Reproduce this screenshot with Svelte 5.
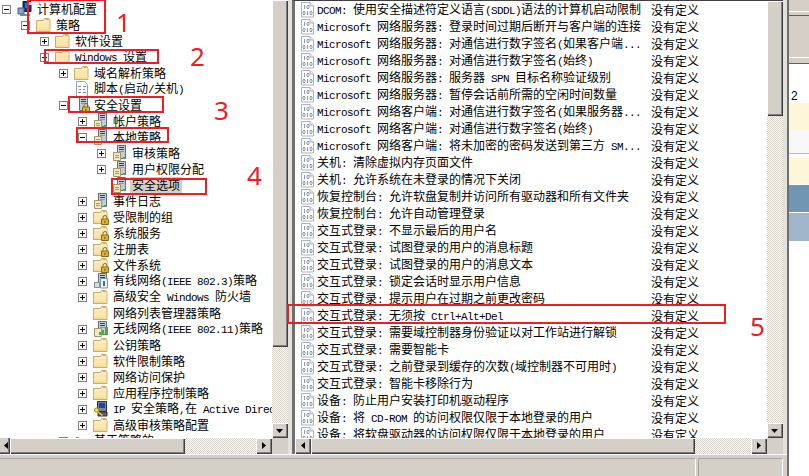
<script>
  const tree = [
    [0, 'minus', 'computer', '计算机配置'],
    [1, 'minus', 'folder', '策略'],
    [2, 'plus', 'folder', '软件设置'],
    [2, 'minus', 'folder', 'Windows 设置'],
    [3, 'plus', 'folder', '域名解析策略'],
    [3, null, 'script', '脚本(启动/关机)'],
    [3, 'minus', 'lockserver', '安全设置'],
    [4, 'plus', 'server', '帐户策略'],
    [4, 'minus', 'server', '本地策略'],
    [5, 'plus', 'server', '审核策略'],
    [5, 'plus', 'server', '用户权限分配'],
    [5, null, 'server', '安全选项', true],
    [4, 'plus', 'server', '事件日志'],
    [4, 'plus', 'lockfolder', '受限制的组'],
    [4, 'plus', 'lockfolder', '系统服务'],
    [4, 'plus', 'lockfolder', '注册表'],
    [4, 'plus', 'lockfolder', '文件系统'],
    [4, 'plus', 'net', '有线网络(IEEE 802.3)策略'],
    [4, 'plus', 'folder', '高级安全 Windows 防火墙'],
    [4, null, 'folder', '网络列表管理器策略'],
    [4, 'plus', 'wireless', '无线网络(IEEE 802.11)策略'],
    [4, 'plus', 'folder', '公钥策略'],
    [4, 'plus', 'folder', '软件限制策略'],
    [4, 'plus', 'folder', '网络访问保护'],
    [4, 'plus', 'folder', '应用程序控制策略'],
    [4, 'plus', 'ip', 'IP 安全策略,在 Active Directory (...)'],
    [4, 'plus', 'folder', '高级审核策略配置'],
    [3, 'plus', 'qos', '基于策略的 QoS']
  ];

  const list = [
    'DCOM: 使用安全描述符定义语言(SDDL)语法的计算机启动限制',
    'Microsoft 网络服务器: 登录时间过期后断开与客户端的连接',
    'Microsoft 网络服务器: 对通信进行数字签名(如果客户端...',
    'Microsoft 网络服务器: 对通信进行数字签名(始终)',
    'Microsoft 网络服务器: 服务器 SPN 目标名称验证级别',
    'Microsoft 网络服务器: 暂停会话前所需的空闲时间数量',
    'Microsoft 网络客户端: 对通信进行数字签名(如果服务器...',
    'Microsoft 网络客户端: 对通信进行数字签名(始终)',
    'Microsoft 网络客户端: 将未加密的密码发送到第三方 SM...',
    '关机: 清除虚拟内存页面文件',
    '关机: 允许系统在未登录的情况下关闭',
    '恢复控制台: 允许软盘复制并访问所有驱动器和所有文件夹',
    '恢复控制台: 允许自动管理登录',
    '交互式登录: 不显示最后的用户名',
    '交互式登录: 试图登录的用户的消息标题',
    '交互式登录: 试图登录的用户的消息文本',
    '交互式登录: 锁定会话时显示用户信息',
    '交互式登录: 提示用户在过期之前更改密码',
    '交互式登录: 无须按 Ctrl+Alt+Del',
    '交互式登录: 需要域控制器身份验证以对工作站进行解锁',
    '交互式登录: 需要智能卡',
    '交互式登录: 之前登录到缓存的次数(域控制器不可用时)',
    '交互式登录: 智能卡移除行为',
    '设备: 防止用户安装打印机驱动程序',
    '设备: 将 CD-ROM 的访问权限仅限于本地登录的用户',
    '设备: 将软盘驱动器的访问权限仅限于本地登录的用户'
  ];

  const runs = (s) =>
    s.split(/([\x00-\x7f]+)/).filter(Boolean).map((t) => ({ t, lat: /^[\x00-\x7f]/.test(t) }));
</script>

{#snippet label(s)}
  {#each runs(s) as r}{#if r.lat}<span class="lat">{r.t}</span>{:else}{r.t}{/if}{/each}
{/snippet}

{#snippet arrow(dir)}
  <svg width="8" height="8" viewBox="0 0 8 8">
    {#if dir === 'down'}<path d="M0 2h7L3.5 6z" fill="#000" />{/if}
    {#if dir === 'left'}<path d="M6 0v7L2 3.5z" fill="#000" />{/if}
    {#if dir === 'right'}<path d="M2 0v7l4-3.500z" fill="#000" />{/if}
  </svg>
{/snippet}

{#snippet folderShape()}
  <path d="M.5 3.500h7l1-2h4.500l1 2v11H.5z" fill="#fbe6ac" stroke="#c8ac6c" />
  <path d="M1.500 4.500h12v1h-12z" fill="#fff6d6" />
  <path d="M1.500 12h12v2h-12z" fill="#f7dc92" />
  <path d="M10 2h2.500v1H10z" fill="#8fb0d0" />
{/snippet}

{#snippet lock()}
  <path d="M10 10V8.500a2 2 0 0 1 4 0V10" fill="none" stroke="#8a6a18" />
  <path d="M8.500 10h7v5.500h-7z" fill="#e0b030" stroke="#8a6a18" />
  <path d="M11.500 12h1v2h-1z" fill="#5a4008" />
{/snippet}

{#snippet tower()}
  <path d="M5.500 .5h8v13h-8z" fill="#c3ccd6" stroke="#5f6f80" />
  <path d="M7 2h5v1H7zM7 4h5v1H7z" fill="#2f4258" />
  <path d="M7 6h5v1H7z" fill="#8899aa" />
{/snippet}

{#snippet icon(kind)}
  <svg class="ico" width="16" height="16" viewBox="0 0 16 16">
    {#if kind === 'folder'}
      {@render folderShape()}
    {:else if kind === 'lockfolder'}
      {@render folderShape()}
      {@render lock()}
    {:else if kind === 'computer'}
      <path d="M6 .5h8v10H6z" fill="#1b2f7a" stroke="#111b44" />
      <path d="M8 2h4v5H8z" fill="#2f6fd8" />
      <path d="M1 7h6v6H1z" fill="#8ea2c4" stroke="#4a5a80" />
      <path d="M3 13h10v2H3z" fill="#7d8794" />
      <path d="M12 1h3v3h-3z" fill="#d8dde6" />
    {:else if kind === 'script'}
      <path d="M2.500 .5h8l3 3v12h-11z" fill="#fff" stroke="#9aa4b4" />
      <path d="M4 5h3v1H4zM9 5h3v1H9zM5 8h2v1H5zM9 8h2v1H9zM4 11h3v1H4zM9 11h3v1H9z" fill="#7d8ba0" />
    {:else if kind === 'server' || kind === 'lockserver'}
      {@render tower()}
      {#if kind === 'server'}
        <path d="M1.500 7.500h7v8h-7z" fill="#f5e9c0" stroke="#a49468" />
        <path d="M3 10h4v1H3zM3 12h4v1H3z" fill="#a49468" />
        <path d="M11 12h2v2h-2z" fill="#3fae3a" />
      {:else}
        {@render lock()}
      {/if}
    {:else if kind === 'net'}
      {@render tower()}
      <path d="M7.500 5.500h7v9.500h-7z" fill="#eef4fb" stroke="#7f93aa" />
      <path d="M10 8h2v5h-2z" fill="#2f6fd0" />
      <path d="M1.500 9.500h5v5h-5z" fill="#d7dde4" stroke="#7f8a98" />
    {:else if kind === 'wireless'}
      {@render tower()}
      <path d="M1.500 7.500h7v8h-7z" fill="#f5e9c0" stroke="#a49468" />
      <path d="M6 14h2v-3H6zM9 14h2V9H9zM12 14h3V6h-3z" fill="#4ea83e" />
    {:else if kind === 'ip'}
      <path d="M4.500 .5h9v10h-9z" fill="#7c8694" stroke="#2a3038" />
      <path d="M6 2h6v5H6z" fill="#1f3fc0" />
      <path d="M5 11h9v4H5z" fill="#5c6470" stroke="#2a3038" />
      <circle cx="3.500" cy="9" r="2" fill="#ffe83a" stroke="#9a8a10" />
      <path d="M4.500 10.500l5 4" stroke="#e8d020" stroke-width="1.600" />
    {:else if kind === 'qos'}
      <path d="M2 4h3v12H2z" fill="#56b848" />
      <path d="M6 6h3v10H6z" fill="#e06a5a" />
    {/if}
  </svg>
{/snippet}

{#snippet listIcon()}
  <svg class="lico" width="14" height="16" viewBox="0 0 14 16">
    <path d="M.5 .5h8.500l3.500 3.500v11H.5z" fill="#fff" stroke="#aab1c2" />
    <path d="M9 .5v3.500h3.500" fill="#e8ebf2" stroke="#aab1c2" />
    <path d="M3 3h1v4H3zM6 3h2v1H6zM6 6h2v1H6zM5.500 4h1v2h-1zM7.500 4h1v2h-1z" fill="#8c9ab4" />
    <path d="M2 9h2v1H2zM2 12h2v1H2zM1.500 10h1v2h-1zM3.500 10h1v2h-1zM6 9h1v4H6zM9 9h2v1H9zM9 12h2v1H9zM8.500 10h1v2h-1zM10.500 10h1v2h-1z" fill="#8c9ab4" />
  </svg>
{/snippet}

<div class="root">
  <div class="content">
    <div class="main">
      <section class="pane left">
        <div class="pane-top">
          <div class="tree">
            {#each tree as [lvl, exp, ic, text, sel]}
              <div class="trow" style="padding-left:{lvl * 19 + 2}px">
                {#if exp}
                  <svg class="exp" width="9" height="9" viewBox="0 0 9 9">
                    <rect x=".5" y=".5" width="8" height="8" fill="#fff" stroke="#808080" />
                    <path d="M2 4h5v1H2z" fill="#000" />
                    {#if exp === 'plus'}<path d="M4 2h1v5H4z" fill="#000" />{/if}
                  </svg>
                {:else}
                  <span class="exp"></span>
                {/if}
                {@render icon(ic)}
                <span class="ttext" class:sel>{@render label(text)}</span>
              </div>
            {/each}
          </div>
          <div class="vbar">
            <div class="btn thumb thumb-left"></div>
            <div class="dither"></div>
            <div class="btn sq">{@render arrow('down')}</div>
          </div>
        </div>
        <div class="hbar">
          <div class="btn sq cut">{@render arrow('left')}</div>
          <div class="btn hthumb hthumb-left"></div>
          <div class="dither"></div>
          <div class="btn sq">{@render arrow('right')}</div>
          <div class="corner"></div>
        </div>
      </section>

      <div class="splitter"></div>

      <section class="pane right">
        <div class="pane-top">
          <div class="listview">
            {#each list as row}
              <div class="lrow">
                {@render listIcon()}
                <span class="lname">{@render label(row)}</span>
                <span class="lval">没有定义</span>
              </div>
            {/each}
          </div>
          <div class="vbar">
            <div class="btn thumb thumb-right"></div>
            <div class="dither"></div>
            <div class="btn sq">{@render arrow('down')}</div>
          </div>
        </div>
        <div class="hbar">
          <div class="btn sq">{@render arrow('left')}</div>
          <div class="btn hthumb hthumb-right"></div>
          <div class="dither"></div>
          <div class="btn sq">{@render arrow('right')}</div>
          <div class="corner"></div>
        </div>
      </section>

      <div class="splitter"></div>
    </div>

    <footer class="status">
      <div class="cell cell-a"></div>
      <div class="cell cell-b"></div>
    </footer>
  </div>

  <aside class="side">
    <div class="s-tab1"></div>
    <div class="s-tab2"></div>
    <div class="s-head"></div>
    <div class="s-num"><span>2</span></div>
    <div class="s-row cream h27"></div>
    <div class="s-row pale"></div>
    <div class="s-row cream h27 gaptop"></div>
    <div class="s-row blue"></div>
    <div class="s-row lblue"></div>
    <div class="s-rest"></div>
  </aside>

  <div class="mark b1"></div>
  <div class="mark b2"></div>
  <div class="mark b3"></div>
  <div class="mark b4"></div>
  <div class="mark b5"></div>
  <div class="mark b6"></div>
  <span class="num n1">1</span>
  <span class="num n2">2</span>
  <span class="num n3">3</span>
  <span class="num n4">4</span>
  <span class="num n5">5</span>
</div>

<style>
  :global(body) {
    margin: 0;
    background: #d4d0c8;
  }
  .root {
    position: relative;
    display: flex;
    width: 809px;
    height: 476px;
    overflow: hidden;
    background: #d4d0c8;
    color: #000;
    font: 12px/16px "Noto Sans CJK SC", sans-serif;
  }
  .lat {
    font-family: "Liberation Mono", monospace;
    font-size: 11px;
    letter-spacing: -0.6px;
    white-space: pre;
  }
  .content {
    display: flex;
    flex-direction: column;
    width: 787px;
    border-right: 2px solid #6e6e6e;
  }
  .main {
    display: flex;
    height: 454px;
    border-bottom: 1px solid #fff;
  }
  .pane {
    display: flex;
    flex-direction: column;
    height: 454px;
  }
  .left {
    width: 288px;
  }
  .splitter {
    width: 4px;
    background: #e4e1da;
  }
  .right {
    width: 488px;
    border-left: 3px solid #6e6e6e;
    border-top: 1px solid #404040;
    height: 453px;
    box-sizing: content-box;
  }
  .pane-top {
    display: flex;
    flex: 1;
    min-height: 0;
  }
  .tree {
    flex: 1;
    min-width: 0;
    padding-top: 1px;
    overflow: hidden;
    background: #fff;
  }
  .trow {
    display: flex;
    align-items: center;
    height: 16px;
    white-space: nowrap;
  }
  .exp {
    flex: none;
    width: 9px;
    height: 9px;
    margin-right: 6px;
  }
  .ico {
    flex: none;
    margin-right: 4px;
  }
  .ttext {
    line-height: 16px;
  }
  .sel {
    margin: 0 -2px;
    padding: 0 2px;
    background: #d4d0c8;
  }
  .listview {
    flex: 1;
    min-width: 0;
    overflow: hidden;
    background: #fff;
  }
  .lrow {
    display: flex;
    align-items: center;
    height: 17px;
    padding-left: 6px;
    white-space: nowrap;
  }
  .lico {
    flex: none;
    margin-right: 2px;
  }
  .lname {
    flex: none;
    width: 334px;
    overflow: hidden;
    line-height: 17px;
  }
  .vbar {
    display: flex;
    flex: none;
    flex-direction: column;
    width: 16px;
  }
  .hbar {
    display: flex;
    flex: none;
    height: 16px;
  }
  .dither {
    flex: 1;
    background: repeating-conic-gradient(#d4d0c8 0 25%, #fff 0 50%) 0 0 / 2px 2px;
  }
  .btn {
    flex: none;
    display: flex;
    align-items: center;
    justify-content: center;
    box-sizing: border-box;
    background: #d4d0c8;
    box-shadow: inset 1px 1px 0 #fff, inset -1px -1px 0 #404040, inset -2px -2px 0 #808080;
  }
  .sq {
    width: 16px;
    height: 15px;
  }
  .hbar .sq {
    height: 16px;
  }
  .cut {
    width: 10px;
    box-shadow: inset -1px -1px 0 #404040, inset -2px -2px 0 #808080;
    justify-content: flex-end;
  }
  .thumb {
    width: 16px;
  }
  .thumb-left {
    height: 347px;
  }
  .thumb-right {
    height: 115px;
  }
  .hthumb-left {
    width: 175px;
  }
  .hthumb-right {
    width: 384px;
  }
  .corner {
    flex: none;
    width: 16px;
    background: #d4d0c8;
  }
  .status {
    flex: 1;
    display: flex;
    gap: 2px;
    padding: 3px 4px 0 0;
  }
  .cell {
    height: 18px;
    border-top: 1px solid #a8a5a0;
    border-right: 1px solid #fff;
    border-left: 1px solid #a8a5a0;
  }
  .cell-a {
    flex: 1;
    border-left: none;
  }
  .cell-b {
    width: 83px;
  }
  .side {
    display: flex;
    flex-direction: column;
    width: 20px;
    background: #fff;
  }
  .s-tab1 {
    height: 11px;
    background: #d4d0c8;
    border-bottom: 1px solid #fff;
  }
  .s-tab2 {
    height: 3px;
    background: #d4d0c8;
    border-bottom: 1px solid #606060;
  }
  .s-head {
    height: 47px;
    border-bottom: 1px solid #606060;
    background: linear-gradient(#fff, #fff) 0 41px / 100% 1px no-repeat #d4d0c8;
  }
  .s-num {
    height: 39px;
    display: flex;
    align-items: flex-end;
    padding-left: 2px;
    font: 12px/14px "Liberation Sans", sans-serif;
  }
  .s-row {
    flex: none;
  }
  .h27 {
    height: 27px;
  }
  .cream {
    background: #fdf6d9;
  }
  .pale {
    height: 23px;
    background: #f8f8f8;
    border-bottom: 1px solid #b8b8b8;
  }
  .gaptop {
    margin-top: 3px;
    margin-bottom: 1px;
  }
  .blue {
    height: 27px;
    background: #7096b3;
    margin-bottom: 1px;
  }
  .lblue {
    height: 28px;
    background: #a2b6cb;
  }
  .s-rest {
    flex: 1;
  }
  .mark {
    position: absolute;
    box-sizing: border-box;
    border: 2px solid #ee1c25;
  }
  .b1 { left: 27px; top: -1px; width: 79px; height: 35px; }
  .b2 { left: 44px; top: 49px; width: 115px; height: 15px; }
  .b3 { left: 68px; top: 96px; width: 96px; height: 17px; }
  .b4 { left: 76px; top: 127px; width: 93px; height: 16px; }
  .b5 { left: 111px; top: 178px; width: 96px; height: 17px; }
  .b6 { left: 287px; top: 304px; width: 439px; height: 20px; }
  .num {
    position: absolute;
    color: #ee1c25;
    font: 26px/26px "Noto Sans", sans-serif;
    text-shadow: 0 0 2px #fff, 0 0 2px #fff;
  }
  .n1 { left: 116px; top: 9px; }
  .n2 { left: 190px; top: 43px; }
  .n3 { left: 214px; top: 97px; }
  .n4 { left: 247px; top: 162px; }
  .n5 { left: 750px; top: 313px; }
</style>
